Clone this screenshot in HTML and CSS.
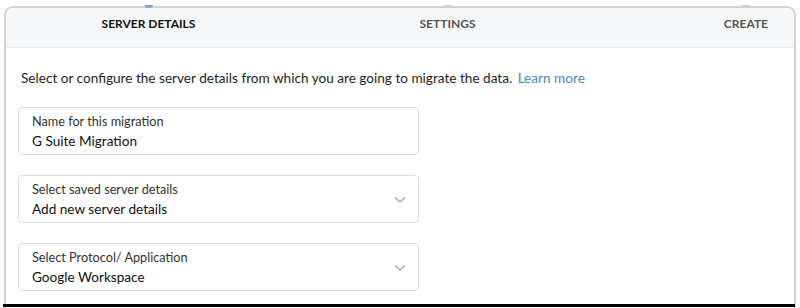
FILE: index.html
```html
<!DOCTYPE html>
<html>
<head>
<meta charset="utf-8">
<link rel="stylesheet" href="styles.css">
</head>
<body>
<div class="card">
  <div class="steps">
    <div class="step active"><span class="dot"></span><span class="step-name">SERVER DETAILS</span></div>
    <div class="step"><span class="dot"></span><span class="step-name">SETTINGS</span></div>
    <div class="step last"><span class="step-name">CREATE<span class="dot"></span></span></div>
  </div>
  <div class="content">
    <p class="intro">Select or configure the server details from which you are going to migrate the data. <a class="link">Learn more</a></p>
    <div class="field">
      <div class="label">Name for this migration</div>
      <div class="value">G Suite Migration</div>
    </div>
    <div class="field select">
      <div class="label">Select saved server details</div>
      <div class="value">Add new server details</div>
      <svg class="chev" width="12" height="8" viewBox="0 0 12 8"><path d="M1 1.5 L6 6 L11 1.5" fill="none" stroke="#a0a0a0" stroke-width="1.2"/></svg>
    </div>
    <div class="field select">
      <div class="label">Select Protocol/ Application</div>
      <div class="value">Google Workspace</div>
      <svg class="chev" width="12" height="8" viewBox="0 0 12 8"><path d="M1 1.5 L6 6 L11 1.5" fill="none" stroke="#a0a0a0" stroke-width="1.2"/></svg>
    </div>
  </div>
</div>
<div class="bottom"></div>
</body>
</html>
```
FILE: styles.css
```css
html, body {
  margin: 0;
  padding: 0;
  background: #fff;
  font-family: Lato, "Open Sans", sans-serif;
  overflow: hidden;
}
body {
  height: 308px;
  position: relative;
}
.card {
  margin: 6px 4px 0 4px;
  height: 302px;
  border: 2px solid #d2d2d2;
  border-bottom: none;
  border-radius: 9px 9px 0 0;
  background: #fff;
  box-sizing: border-box;
}
.steps {
  height: 39px;
  background: #f5f7f9;
  border-bottom: 1px solid #e8eaed;
  border-radius: 7px 7px 0 0;
  display: grid;
  grid-template-columns: 292px 299px 1fr;
}
.step {
  position: relative;
  display: flex;
  justify-content: center;
  align-items: flex-start;
  padding-top: 8px;
  font-size: 12px;
  font-weight: 700;
  color: #555;
}
.step:first-child {
  margin-left: -7px;
}
.step.last {
  justify-content: flex-end;
  padding-right: 26px;
}
.step-name {
  position: relative;
}
.step.active {
  color: #111;
}
.dot {
  position: absolute;
  left: 50%;
  top: -3px;
  width: 8px;
  height: 3px;
  margin-left: -4px;
  border-radius: 0 0 4px 4px;
  background: #cfcfcf;
}
.step.last .dot {
  top: -11px;
}
.step.active .dot {
  background: #7aa6d2;
}
.content {
  padding: 20px 0 0 12px;
}
.intro {
  margin: 0 0 19px 3px;
  font-size: 13.6px;
  color: #1e1e1e;
  line-height: 20px;
}
.link {
  color: #4a86c0;
  margin-left: 2px;
}
.field {
  position: relative;
  width: 401px;
  height: 48px;
  box-sizing: border-box;
  border: 1px solid #dcdcdc;
  border-radius: 4px;
  padding: 5px 13px 0 13px;
  margin-bottom: 20px;
}
.label {
  font-size: 12.7px;
  color: #333;
  line-height: 16px;
}
.value {
  font-size: 13.6px;
  color: #111;
  line-height: 22px;
  margin-top: 1px;
}
.chev {
  position: absolute;
  right: 12px;
  top: 20px;
}
.bottom {
  position: absolute;
  left: 3px;
  right: 5px;
  bottom: 1px;
  height: 3px;
  background: #000;
}
```
